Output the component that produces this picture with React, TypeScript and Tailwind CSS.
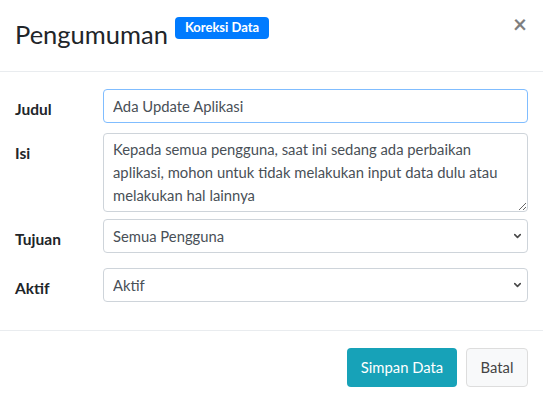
import { ChevronDown } from "lucide-react";

const fieldBase =
  "w-full border rounded-[4px] px-[9px] text-[14.8px] text-[#495057] bg-white outline-none";

const SelectField = ({ value }: { value: string }) => {
  return (
    <div className="relative flex-1">
      <select
        defaultValue={value}
        className={`${fieldBase} border-[#ced4da] h-[34px] appearance-none`}
      >
        <option>{value}</option>
      </select>
      <ChevronDown
        size={11}
        strokeWidth={3.5}
        className="absolute right-[5px] top-1/2 -translate-y-1/2 text-[#4a4a4a] pointer-events-none"
      />
    </div>
  );
};

const App = () => {
  return (
    <div className="w-[543px] h-[401px] bg-white text-[#212529] font-['Lato',sans-serif] overflow-hidden">
      {/* header */}
      <div className="h-[72px] border-b border-[#e9ecef] flex items-start justify-between px-[15px]">
        <h3 className="text-[25.5px] leading-none pt-[22px] flex items-start">
          Pengumuman
          <span className="ml-[7px] mt-[-5px] bg-[#007bff] text-white text-[13px] font-bold leading-none rounded-[4px] px-[10px] pt-[4px] pb-[5px]">
            Koreksi Data
          </span>
        </h3>
        <button className="text-[24px] font-bold text-black opacity-50 leading-none pt-[12px] pr-[1px]">
          ×
        </button>
      </div>

      {/* body */}
      <div className="px-[15px] pt-[17px] pb-[28px]">
        <div className="flex items-start">
          <label className="w-[88px] pt-[9px] text-[15.5px] font-bold">Judul</label>
          <input
            type="text"
            defaultValue="Ada Update Aplikasi"
            className={`${fieldBase} border-[#80bdff] flex-1 h-[34px]`}
          />
        </div>

        <div className="flex items-start mt-[10px]">
          <label className="w-[88px] pt-[9px] text-[15.5px] font-bold">Isi</label>
          <textarea
            defaultValue="Kepada semua pengguna, saat ini sedang ada perbaikan aplikasi, mohon untuk tidak melakukan input data dulu atau melakukan hal lainnya"
            className={`${fieldBase} border-[#ced4da] flex-1 h-[79px] py-[4px] leading-[23px]`}
          />
        </div>

        <div className="flex items-start mt-[7px]">
          <label className="w-[88px] pt-[9px] text-[15.5px] font-bold">Tujuan</label>
          <SelectField value="Semua Pengguna" />
        </div>

        <div className="flex items-start mt-[15px]">
          <label className="w-[88px] pt-[9px] text-[15.5px] font-bold">Aktif</label>
          <SelectField value="Aktif" />
        </div>
      </div>

      {/* footer */}
      <div className="border-t border-[#e9ecef] flex justify-end gap-[9px] px-[15px] pt-[17px]">
        <button className="h-[39px] w-[110px] rounded-[4px] bg-[#17a2b8] text-white text-[14.8px]">
          Simpan Data
        </button>
        <button className="h-[39px] w-[62px] rounded-[4px] bg-[#f8f9fa] border border-[#dddddd] text-[#444] text-[14.8px]">
          Batal
        </button>
      </div>
    </div>
  );
};

export default App;
